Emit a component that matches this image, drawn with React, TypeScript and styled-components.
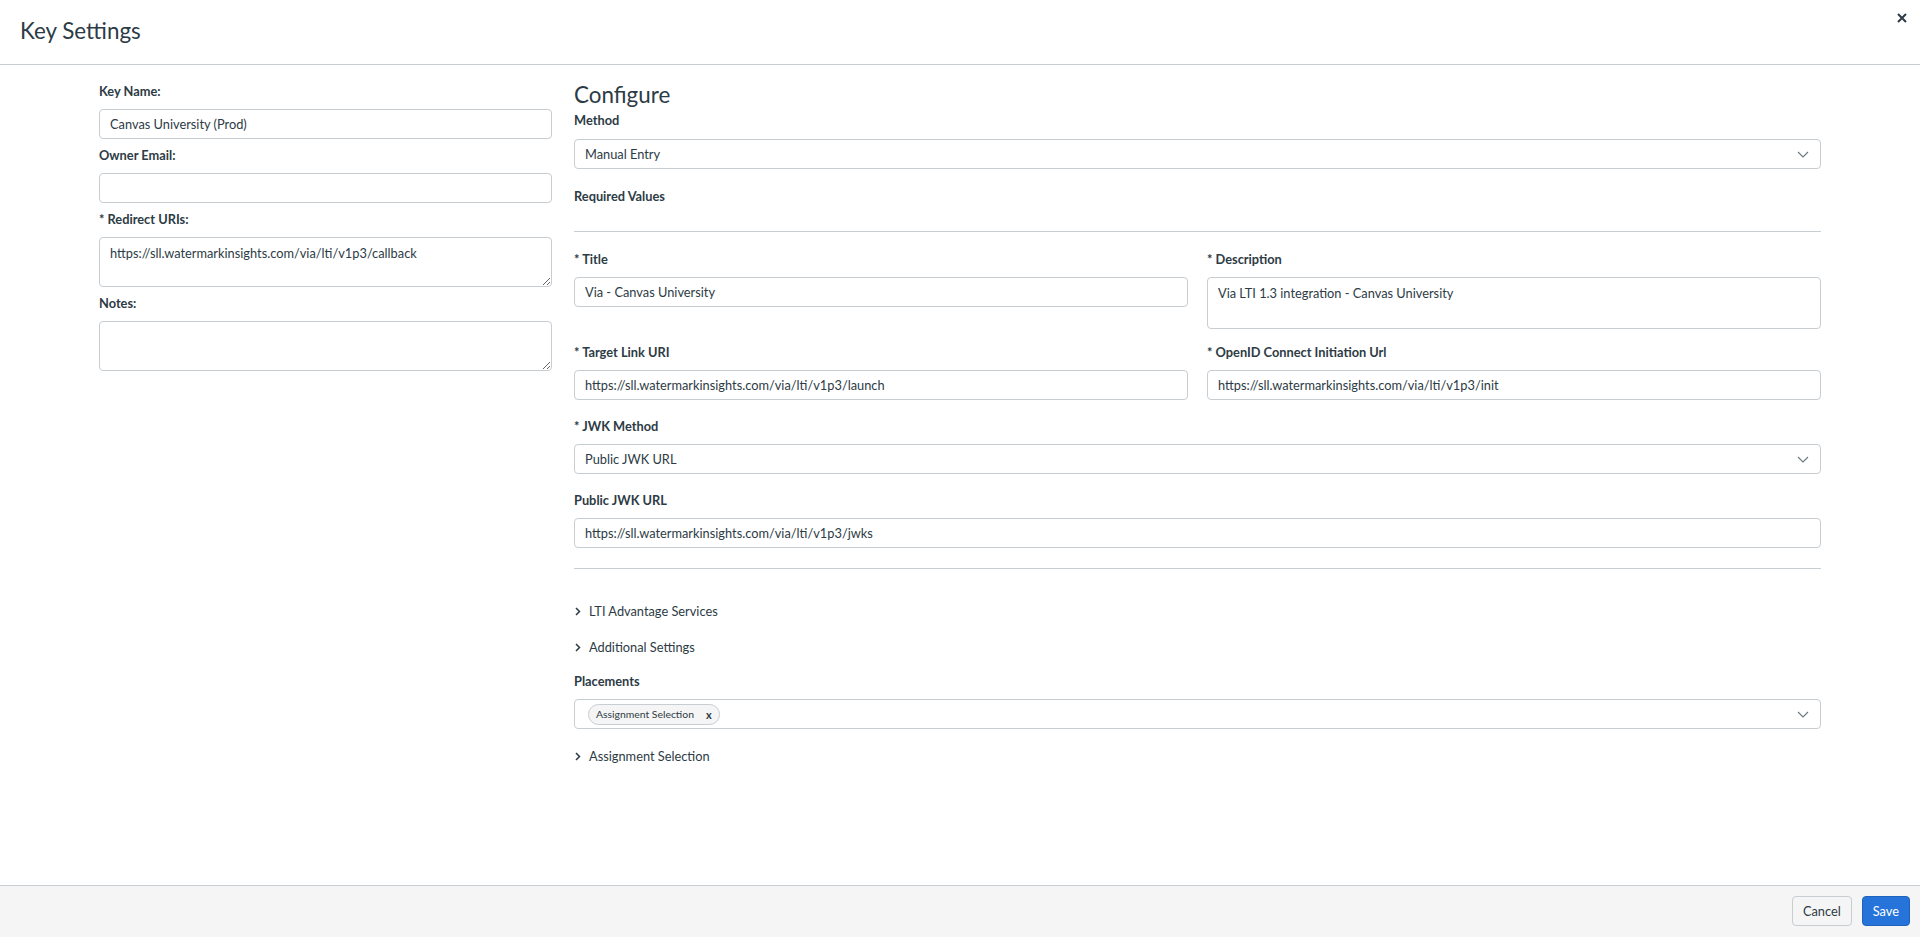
import * as React from 'react';
import styled, { createGlobalStyle } from 'styled-components';

const GlobalStyle = createGlobalStyle`
  html, body, #root {
    height: 100%;
  }
  body {
    margin: 0;
    background: #fff;
    color: #2d3b45;
    font-family: Lato, "Noto Sans", "Liberation Sans", sans-serif;
    font-size: 12.8px;
  }
  * {
    box-sizing: border-box;
  }
`;

const Modal = styled.div`
  display: flex;
  flex-direction: column;
  height: 100%;
`;

const Header = styled.header`
  flex-shrink: 0;
  height: 65px;
  display: flex;
  justify-content: space-between;
  align-items: flex-start;
  padding-left: 20px;
  border-bottom: 1px solid #c7cdd1;
`;

const Heading = styled.h2<{ $top?: number }>`
  margin: ${p => p.$top ?? 0}px 0 0;
  font-size: 22.4px;
  font-weight: 400;
  line-height: 28px;
  color: #2d3b45;
`;

const CloseButton = styled.button`
  margin: 13px 13px 0 0;
  padding: 0;
  width: 10px;
  height: 10px;
  border: 0;
  background: none;
  display: flex;
  cursor: pointer;
`;

const Body = styled.main`
  flex: 1;
  overflow: auto;
  display: grid;
  grid-template-columns: 453px 1fr;
  column-gap: 22px;
  align-items: start;
  padding: 0 99px;
`;

const LeftColumn = styled.section`
  padding-top: 17px;
`;

const RightColumn = styled.section`
  padding-top: 16px;
`;

const Field = styled.div<{ $gap?: number }>`
  margin-bottom: ${p => p.$gap ?? 0}px;
`;

const Label = styled.label<{ $gap?: number; $top?: number }>`
  display: block;
  font-weight: 700;
  font-size: 12.8px;
  line-height: 18px;
  margin: ${p => p.$top ?? 0}px 0 ${p => p.$gap ?? 9}px;
  color: #2d3b45;
`;

const TextInput = styled.input`
  display: block;
  width: 100%;
  height: 30px;
  padding: 0 10px;
  border: 1px solid #c7cdd1;
  border-radius: 4px;
  font: inherit;
  font-size: 12.8px;
  color: #2d3b45;
  background: #fff;
  outline: none;
`;

const TextArea = styled.textarea<{ $height: number; $fixed?: boolean }>`
  display: block;
  width: 100%;
  height: ${p => p.$height}px;
  padding: 6px 10px;
  border: 1px solid #c7cdd1;
  border-radius: 4px;
  font: inherit;
  font-size: 12.8px;
  line-height: 18px;
  color: #2d3b45;
  background: #fff;
  outline: none;
  resize: ${p => (p.$fixed ? 'none' : 'both')};
`;

const SelectBox = styled.div`
  display: flex;
  align-items: center;
  justify-content: space-between;
  height: 30px;
  padding: 0 11px 0 10px;
  border: 1px solid #c7cdd1;
  border-radius: 4px;
  font-size: 12.8px;
  background: #fff;
`;

const ChipRow = styled.div`
  display: flex;
  align-items: center;
  gap: 6px;
  padding-left: 3px;
`;

const Chip = styled.span`
  display: inline-flex;
  align-items: center;
  gap: 12px;
  height: 21px;
  padding: 0 7px 0 7px;
  border: 1px solid #c7cdd1;
  border-radius: 11px;
  background: #f5f5f5;
  font-size: 10.4px;
  color: #2d3b45;
`;

const ChipRemove = styled.span`
  font-weight: 700;
  font-size: 11px;
  line-height: 1;
  margin-top: 1px;
`;

const SectionTitle = styled.div<{ $top: number; $bottom: number }>`
  margin: ${p => p.$top}px 0 ${p => p.$bottom}px;
  font-weight: 700;
  line-height: 18px;
`;

const Divider = styled.hr<{ $top: number; $bottom: number }>`
  margin: ${p => p.$top}px 0 ${p => p.$bottom}px;
  border: 0;
  border-top: 1px solid #c7cdd1;
`;

const Pair = styled.div<{ $gap: number }>`
  display: grid;
  grid-template-columns: 1fr 1fr;
  column-gap: 19px;
  margin-bottom: ${p => p.$gap}px;
`;

const Toggle = styled.button<{ $top?: number }>`
  display: flex;
  align-items: center;
  gap: 8px;
  width: 100%;
  height: 36px;
  margin-top: ${p => p.$top ?? 0}px;
  padding: 0 0 0 1px;
  border: 0;
  background: none;
  font: inherit;
  font-size: 12.8px;
  color: #2d3b45;
  text-align: left;
  cursor: pointer;
`;

const Footer = styled.footer`
  flex-shrink: 0;
  height: 52px;
  display: flex;
  justify-content: flex-end;
  align-items: center;
  gap: 10px;
  padding: 0 10px 1px 0;
  border-top: 1px solid #c7cdd1;
  background: #f5f5f5;
`;

const Button = styled.button<{ $primary?: boolean }>`
  height: 30px;
  padding: 0 10px;
  border-radius: 4px;
  border: 1px solid ${p => (p.$primary ? '#1f63bd' : '#c7cdd1')};
  background: ${p => (p.$primary ? '#2674da' : '#f5f5f5')};
  color: ${p => (p.$primary ? '#fff' : '#2d3b45')};
  font: inherit;
  font-size: 12.8px;
  cursor: pointer;
`;

const ChevronDown = () => (
  <svg width="12" height="7" viewBox="0 0 12 7" fill="none">
    <path d="M1 1l5 5 5-5" stroke="#6b7780" strokeWidth="1.1" />
  </svg>
);

const ChevronRight = () => (
  <svg width="6" height="9" viewBox="0 0 6 9" fill="none">
    <path d="M1 1l3.5 3.5L1 8" stroke="#2d3b45" strokeWidth="1.5" />
  </svg>
);

const CloseIcon = () => (
  <svg width="10" height="10" viewBox="0 0 10 10">
    <path d="M1 1l8 8M9 1L1 9" stroke="#2d3b45" strokeWidth="2" />
  </svg>
);

const App = () => (
  <Modal>
    <GlobalStyle />
    <Header>
      <Heading $top={17}>Key Settings</Heading>
      <CloseButton aria-label="Close">
        <CloseIcon />
      </CloseButton>
    </Header>

    <Body>
      <LeftColumn>
        <Field $gap={7}>
          <Label>Key Name:</Label>
          <TextInput defaultValue="Canvas University (Prod)" />
        </Field>
        <Field $gap={7}>
          <Label>Owner Email:</Label>
          <TextInput defaultValue="" />
        </Field>
        <Field $gap={7}>
          <Label>* Redirect URIs:</Label>
          <TextArea $height={50} defaultValue="https://sll.watermarkinsights.com/via/lti/v1p3/callback" />
        </Field>
        <Field>
          <Label>Notes:</Label>
          <TextArea $height={50} defaultValue="" />
        </Field>
      </LeftColumn>

      <RightColumn>
        <Heading>Configure</Heading>
        <Field>
          <Label $gap={10} $top={2}>Method</Label>
          <SelectBox>
            <span>Manual Entry</span>
            <ChevronDown />
          </SelectBox>
        </Field>

        <SectionTitle $top={18} $bottom={0}>Required Values</SectionTitle>
        <Divider $top={26} $bottom={18} />

        <Pair $gap={14}>
          <Field>
            <Label>* Title</Label>
            <TextInput defaultValue="Via - Canvas University" />
          </Field>
          <Field>
            <Label>* Description</Label>
            <TextArea $height={52} $fixed defaultValue="Via LTI 1.3 integration - Canvas University" />
          </Field>
        </Pair>

        <Pair $gap={17}>
          <Field>
            <Label>* Target Link URI</Label>
            <TextInput defaultValue="https://sll.watermarkinsights.com/via/lti/v1p3/launch" />
          </Field>
          <Field>
            <Label>* OpenID Connect Initiation Url</Label>
            <TextInput defaultValue="https://sll.watermarkinsights.com/via/lti/v1p3/init" />
          </Field>
        </Pair>

        <Field $gap={17}>
          <Label>* JWK Method</Label>
          <SelectBox>
            <span>Public JWK URL</span>
            <ChevronDown />
          </SelectBox>
        </Field>

        <Field>
          <Label>Public JWK URL</Label>
          <TextInput defaultValue="https://sll.watermarkinsights.com/via/lti/v1p3/jwks" />
        </Field>

        <Divider $top={20} $bottom={24} />

        <Toggle>
          <ChevronRight />
          LTI Advantage Services
        </Toggle>
        <Toggle>
          <ChevronRight />
          Additional Settings
        </Toggle>

        <Field>
          <Label $top={7}>Placements</Label>
          <SelectBox>
            <ChipRow>
              <Chip>
                Assignment Selection
                <ChipRemove>x</ChipRemove>
              </Chip>
            </ChipRow>
            <ChevronDown />
          </SelectBox>
        </Field>

        <Toggle $top={9}>
          <ChevronRight />
          Assignment Selection
        </Toggle>
      </RightColumn>
    </Body>

    <Footer>
      <Button>Cancel</Button>
      <Button $primary>Save</Button>
    </Footer>
  </Modal>
);

export default App;
